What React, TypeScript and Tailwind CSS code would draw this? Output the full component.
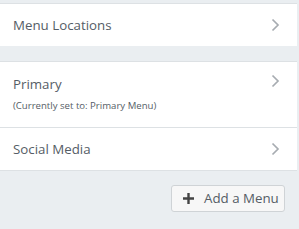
const Chevron = () => (
  <svg width="9" height="14" viewBox="0 0 9 14" className="shrink-0">
    <path d="M1.5 1.5 L7 7 L1.5 12.5" fill="none" stroke="#a7acb1" strokeWidth="1.7" />
  </svg>
);

function Row({ title, sub }: { title: string; sub?: string }) {
  return (
    <div className="flex items-center justify-between pl-[13px] pr-[17px]">
      <div className="flex flex-col">
        <span className="text-[13.3px] leading-[20px] text-[#555d66]">{title}</span>
        {sub && <span className="mt-[5px] text-[9.6px] leading-[14px] text-[#555d66]">{sub}</span>}
      </div>
      <div className={sub ? "self-start" : ""}>
        <Chevron />
      </div>
    </div>
  );
}

export default function App() {
  return (
    <div
      className="h-[229px] w-[299px] overflow-hidden bg-[#eaeef1]"
      style={{ fontFamily: '"Open Sans", "Noto Sans", sans-serif' }}
    >
      <div className="h-[3px]" />
      <div className="mr-[2px] flex h-[43px] items-center border-t border-[#dde1e4] bg-white">
        <div className="w-full">
          <Row title="Menu Locations" />
        </div>
      </div>
      <div className="h-[15px]" />
      <div className="mr-[2px] border-y border-[#dde1e4] bg-white">
        <div className="flex h-[65px] items-start pt-[12px]">
          <div className="w-full">
            <Row title="Primary" sub="(Currently set to: Primary Menu)" />
          </div>
        </div>
        <div className="flex h-[43px] items-center border-t border-[#dde1e4]">
          <div className="w-full">
            <Row title="Social Media" />
          </div>
        </div>
      </div>
      <div className="flex justify-end pr-[14px] pt-[14px]">
        <button className="flex h-[27px] w-[114px] items-center gap-[10px] rounded-[3px] border border-[#cfd3d6] bg-[#f7f7f7] pl-[11px] text-[13.3px] text-[#555d66]">
          <svg width="11" height="11" viewBox="0 0 11 11">
            <path d="M5.5 0 V11 M0 5.5 H11" stroke="#444" strokeWidth="2.4" />
          </svg>
          <span>Add a Menu</span>
        </button>
      </div>
    </div>
  );
}
